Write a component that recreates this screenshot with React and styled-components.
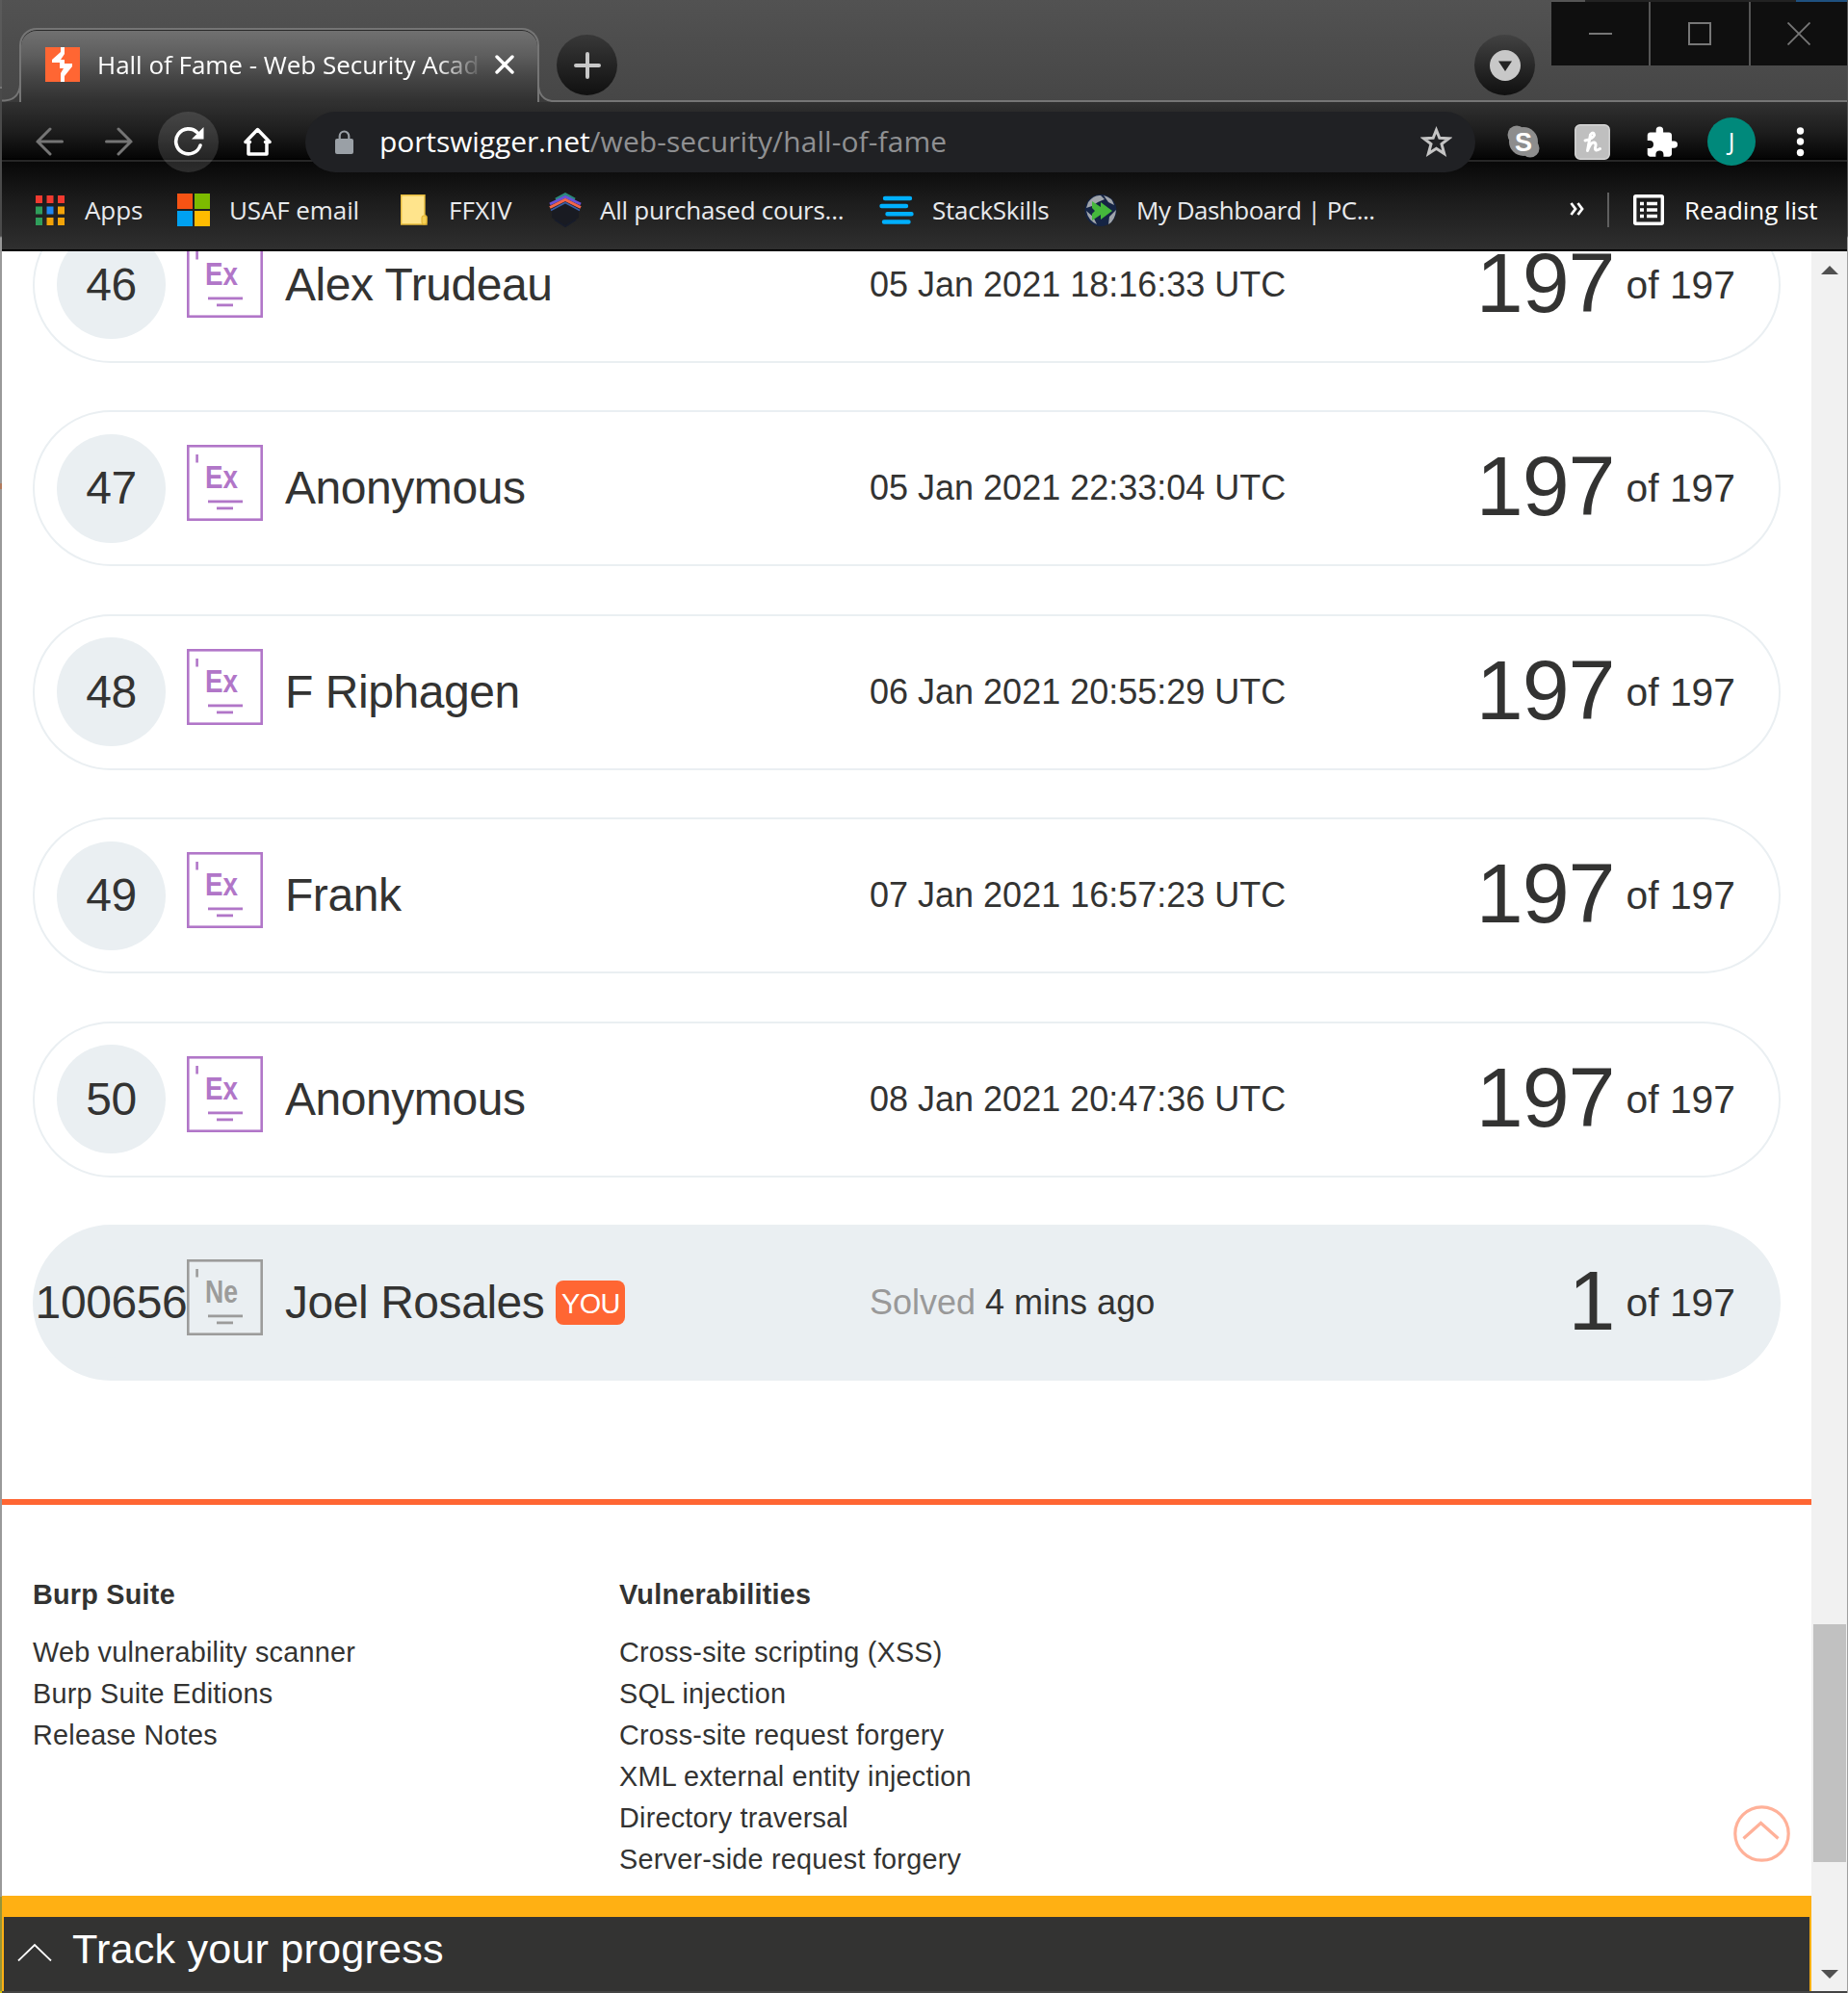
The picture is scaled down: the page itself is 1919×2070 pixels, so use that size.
import React from "react";
import styled, { createGlobalStyle } from "styled-components";

const Global = createGlobalStyle`
  * { box-sizing: border-box; }
  body { margin: 0; background: #fff; }
  svg { display: block; flex: none; }
`;

const ui = `"Open Sans", "Noto Sans", sans-serif`;

const Window = styled.div`
  display: grid;
  grid-template-columns: 2px 1916px 1px;
  width: 1919px;
  height: 2070px;
  overflow: hidden;
  font-family: "Liberation Sans", Arial, sans-serif;
  color: #333332;
`;
const LeftEdge = styled.div`
  background: linear-gradient(#5a5a5a 0 90px, #767676 90px 92px, #4a4a4a 92px 245px, #999 247px 502px, #b07a5c 502px 508px, #999 508px 1970px, #94943a 1970px 2068px, #d8c800 2068px);
`;
const RightEdge = styled.div`
  background: linear-gradient(#555 0 245px, #a0a0a0 247px);
`;
const Main = styled.div`
  display: flex;
  flex-direction: column;
  min-width: 0;
  height: 2070px;
`;

/* tab strip */
const Strip = styled.div`
  flex: none;
  height: 106px;
  display: flex;
  align-items: flex-end;
  background: linear-gradient(#525252, #464646);
`;
const Tab = styled.div`
  width: 540px;
  height: 77px;
  flex: none;
  display: flex;
  align-items: center;
  padding: 0 0 4px 25px;
  border: 2px solid #757575;
  border-bottom: 0;
  border-radius: 18px 18px 0 0;
  background: linear-gradient(#717171, #5e5e5e 35%, #464646 65%, #303030);
  box-shadow: inset 0 1px 0 #2a2a2a;
`;
const TabTitle = styled.div`
  width: 397px;
  margin-left: 18px;
  margin-right: 16px;
  white-space: nowrap;
  font: 26px/40px ${ui};
  letter-spacing: ${(p) => p.$ls}px;
  color: #fff;
  mask-image: linear-gradient(90deg, #000 350px, transparent 402px);
`;
const StripRest = styled.div`
  flex: 1;
  height: 106px;
  display: flex;
  justify-content: space-between;
  align-items: flex-start;
  border-bottom: 2px solid #757575;
`;
const Round = styled.div`
  width: 63px;
  height: 63px;
  margin: 36px 0 0 ${(p) => p.$ml || 0}px;
  border-radius: 50%;
  display: grid;
  place-items: center;
  background: linear-gradient(${(p) => p.$from || "#383838"}, #101010);
`;
const StripEnd = styled.div`
  display: flex;
`;
const Controls = styled.div`
  display: flex;
  gap: 2px;
  margin-left: 17px;
  border-top: 2px solid #222;
  border-image: linear-gradient(90deg, #555 0 37px, #222 37px 253px, #1f5180 253px) 2;
  height: 68px;
  background: #555;
`;
const Control = styled.div`
  width: ${(p) => p.$w}px;
  height: 66px;
  background: #0f0f0f;
  display: grid;
  place-items: center;
  padding-bottom: 1px;
`;

/* toolbar */
const Toolbar = styled.div`
  flex: none;
  height: 62px;
  display: flex;
  align-items: center;
  padding: 20px 43px 0 35px;
  background: linear-gradient(#313131, #1d1d1d 50%, #050505 94%, #000 95%, #000 97%, #262626 97%);
`;
const Nav = styled.div`
  width: 29px;
  margin-right: ${(p) => p.$mr}px;
`;
const Reload = styled.div`
  width: 63px;
  height: 63px;
  flex: none;
  margin-right: 26px;
  border-radius: 50%;
  background: rgba(255, 255, 255, 0.13);
  display: grid;
  place-items: center;
  align-self: center;
  position: relative;
`;
const Address = styled.div`
  width: 1215px;
  height: 63px;
  flex: none;
  margin-left: 35px;
  border-radius: 32px;
  background: #202124;
  display: flex;
  align-items: center;
  padding: 0 24px 0 31px;
  position: relative;
`;
const Url = styled.div`
  flex: 1;
  margin-left: 27px;
  font: 30px/44px ${ui};
  letter-spacing: 0.08px;
  color: #8f9092;
  white-space: nowrap;
  b { font-weight: 400; color: #fff; letter-spacing: -0.1px; }
`;
const Extensions = styled.div`
  flex: 1;
  display: flex;
  align-items: center;
  margin-left: 33px;
  position: relative;
`;
const Extension = styled.div`
  flex: none;
  margin-right: ${(p) => p.$mr}px;
`;
const Avatar = styled.div`
  width: 50px;
  height: 50px;
  flex: none;
  margin-right: 42px;
  border-radius: 50%;
  background: #00897b;
  color: #fff;
  font: 25px/49px ${ui};
  text-align: center;
`;

/* bookmarks */
const Bookmarks = styled.div`
  flex: none;
  height: 93px;
  display: flex;
  align-items: center;
  padding: 9px 32px 0 35px;
  border-bottom: 2px solid #000;
  background: linear-gradient(#080808, #1c1c1c 45%, #2f2f2f);
`;
const Bookmark = styled.div`
  display: flex;
  align-items: center;
  flex: none;
  width: ${(p) => p.$w}px;
  gap: ${(p) => p.$gap}px;
  font: 26px/36px ${ui};
  letter-spacing: ${(p) => p.$ls}px;
  color: ${(p) => p.$color || "#e8eaed"};
  white-space: nowrap;
`;
const More = styled.div`
  flex: 1;
  display: flex;
  justify-content: flex-end;
  padding: 0 24px 3px 0;
`;
const Divider = styled.div`
  width: 2px;
  height: 36px;
  margin-right: 25px;
  background: #5f5f5f;
`;

/* page */
const Body = styled.div`
  flex: 1;
  min-height: 0;
  display: grid;
  grid-template-columns: 1879px 37px;
  border-bottom: 2px solid #444;
`;
const Page = styled.div`
  position: relative;
  display: flex;
  flex-direction: column;
  min-height: 0;
  background: #fff;
`;
const Scroller = styled.div`
  flex: 1;
  min-height: 0;
  overflow: hidden;
`;
const List = styled.div`
  display: flex;
  flex-direction: column;
  gap: 49.45px;
  margin-top: -46.2px;
  padding: 0 32px 122.95px;
  border-bottom: 6px solid #ff6633;
`;
const Row = styled.div`
  height: 162px;
  flex: none;
  display: grid;
  grid-template-columns: 113px 79px 607px 1fr auto;
  align-items: center;
  padding: 0 45px 0 23px;
  border: 2px solid #eaeff2;
  border-radius: 81px;
  background: ${(p) => (p.$you ? "#eaeff2" : "#fff")};
`;
const Rank = styled.div`
  width: 113px;
  height: 113px;
  border-radius: 50%;
  background: #eaeff2;
  display: flex;
  align-items: center;
  justify-content: center;
  font-size: 48px;
  line-height: 60px;
  letter-spacing: -0.4px;
`;
const BadgeBox = styled.div`
  margin: 0 0 11px 22px;
  position: relative;
  z-index: 1;
`;
const Name = styled.div`
  display: flex;
  align-items: center;
  margin-left: 45px;
  font-size: 48px;
  line-height: 60px;
  letter-spacing: -0.45px;
  white-space: nowrap;
`;
const You = styled.span`
  width: 72px;
  height: 46px;
  margin-left: 12px;
  border-radius: 8px;
  background: #ff6633;
  color: #fff;
  font-size: 28.8px;
  line-height: 48px;
  letter-spacing: -0.6px;
  text-align: center;
`;
const Time = styled.div`
  margin-left: 45px;
  font-size: 36px;
  line-height: 44px;
  white-space: nowrap;
  i { font-style: normal; color: #999; }
`;
const Score = styled.div`
  display: flex;
  align-items: center;
  gap: 12px;
  font-size: 40.8px;
  line-height: 50px;
  white-space: nowrap;
`;
const Big = styled.span`
  font-size: 88px;
  line-height: 88px;
  letter-spacing: -1px;
  padding-bottom: 4px;
`;
const Footer = styled.div`
  display: grid;
  grid-template-columns: 609px 1fr;
  padding: 72px 32px 0;
  font-size: 28.8px;
  line-height: 43px;
  letter-spacing: 0.23px;
`;
const Heading = styled.div`
  font-weight: 700;
  margin-bottom: 17px;
`;
const Top = styled.div`
  position: absolute;
  right: 22px;
  bottom: 134px;
`;
const Progress = styled.div`
  flex: none;
  height: 99px;
  border: 2px solid #ffb013;
  border-top-width: 22px;
  border-bottom: 0;
  background: #333332;
  color: #fff;
  display: flex;
  align-items: flex-start;
  padding: 8px 0 0 14px;
  font-size: 43.2px;
  line-height: 50px;
  letter-spacing: 0.18px;
  gap: 21px;
`;
const Scrollbar = styled.div`
  background: #f1f1f1;
  display: flex;
  flex-direction: column;
  align-items: center;
  padding: 15px 0 13px;
`;
const Thumb = styled.div`
  width: 34px;
  height: 247px;
  margin: 1402px 0 auto;
  background: #c1c1c1;
`;

const Cert = ({ text, color }) => (
  <svg width="79" height="79" viewBox="0 0 79 79">
    <rect x="1.3" y="1.3" width="76.4" height="76.4" fill="none" stroke={color} strokeWidth="2.6" />
    <rect x="9.3" y="10" width="2.6" height="8.5" fill={color} />
    <text x="19" y="45" fill={color} fontFamily="Liberation Sans, Arial, sans-serif" fontWeight="700" fontSize="34" textLength="34" lengthAdjust="spacingAndGlyphs">{text}</text>
    <rect x="22" y="57.5" width="36" height="2.8" fill={color} />
    <rect x="31" y="64.5" width="17" height="2.8" fill={color} />
  </svg>
);

const rows = [
  { n: "46", name: "Alex Trudeau", t: "05 Jan 2021 18:16:33 UTC" },
  { n: "47", name: "Anonymous", t: "05 Jan 2021 22:33:04 UTC" },
  { n: "48", name: "F Riphagen", t: "06 Jan 2021 20:55:29 UTC" },
  { n: "49", name: "Frank", t: "07 Jan 2021 16:57:23 UTC" },
  { n: "50", name: "Anonymous", t: "08 Jan 2021 20:47:36 UTC" },
];

const appColors = ["#f13a30", "#f13a30", "#f13a30", "#2f9e5b", "#1f86f0", "#f2a309", "#2f9e5b", "#f2a309", "#f2a309"];

const Browser = () => (
  <>
    <Strip>
      <svg width="18" height="77" viewBox="0 0 18 77">
        <path d="M0 76H3Q17 75 18 57V77H0Z" fill="#3a3a3a" />
        <path d="M0 75.500H3Q18 74.500 19 58" fill="none" stroke="#757575" strokeWidth="2" />
      </svg>
      <Tab>
        <svg width="36" height="36" viewBox="0 0 36 36">
          <rect width="36" height="36" fill="#ff6633" />
          <path d="M16 0H20V7L16 13H20V17H28V20L20 30V36H16V27L19 22H15V16H7V13L16 5Z" fill="#fff" />
        </svg>
        <TabTitle $ls={-0.02}>Hall of Fame - Web Security Acad</TabTitle>
        <svg width="20" height="20" viewBox="0 0 20 20"><path d="M2 2L18 18M18 2L2 18" stroke="#fff" strokeWidth="3.400" strokeLinecap="round" /></svg>
      </Tab>
      <svg width="16" height="77" viewBox="0 0 16 77">
        <path d="M0 57Q1 76 16 77H0Z" fill="#3a3a3a" />
        <path d="M-1 57Q-1 74 13 76H16" fill="none" stroke="#757575" strokeWidth="2" />
      </svg>
      <StripRest>
        <Round $ml={2}>
          <svg width="28" height="28" viewBox="0 0 28 28"><path d="M14 2V26M2 14H26" stroke="#c8c8c8" strokeWidth="4" strokeLinecap="round" /></svg>
        </Round>
        <StripEnd>
          <Round $from="#424242">
            <svg width="32" height="32" viewBox="0 0 32 32"><circle cx="16" cy="16" r="16" fill="#c8c8c8" /><path d="M9 11.500H23L16 22Z" fill="#222" /></svg>
          </Round>
          <Controls>
            <Control $w={101}><svg width="24" height="24"><path d="M0 12H24" stroke="#777" strokeWidth="2" /></svg></Control>
            <Control $w={102}><svg width="24" height="24"><rect x="1" y="1" width="22" height="22" fill="none" stroke="#777" strokeWidth="2" /></svg></Control>
            <Control $w={100}><svg width="24" height="24"><path d="M.5.5L23.500 23.500M23.500.5L.5 23.500" stroke="#777" strokeWidth="1.800" /></svg></Control>
          </Controls>
        </StripEnd>
      </StripRest>
    </Strip>
    <Toolbar>
      <Nav $mr={43}><svg width="29" height="30" viewBox="0 0 29 30" fill="none" stroke="#757575" strokeWidth="3" strokeLinecap="round"><path d="M27.500 15H2M15 2L2 15L15 28" /></svg></Nav>
      <Nav $mr={26}><svg width="29" height="30" viewBox="0 0 29 30" fill="none" stroke="#757575" strokeWidth="3" strokeLinecap="round"><path d="M1.500 15H27M14 2L27 15L14 28" /></svg></Nav>
      <Reload>
        <svg width="32" height="32" viewBox="0 0 32 32"><path d="M28 20A13 13 0 1 1 25 6.800" fill="none" stroke="#fff" strokeWidth="3.600" strokeLinecap="round" /><path d="M31.500 1V13.500H19Z" fill="#fff" /></svg>
      </Reload>
      <Nav $mr={0}><svg width="29" height="30" viewBox="0 0 29 30"><path d="M5 14V28H24V14M2 15.500L14.500 2.500L27 15.500H22.500M2 15.500H6.500" fill="none" stroke="#fff" strokeWidth="3.500" strokeLinejoin="round" strokeLinecap="round" /></svg></Nav>
      <Address>
        <svg width="19" height="25" viewBox="0 0 19 25"><rect y="9" width="19" height="16" rx="2" fill="#9aa0a6" /><path d="M4.700 10V6.500A4.800 5 0 0 1 14.300 6.500V10" fill="none" stroke="#9aa0a6" strokeWidth="2.200" /></svg>
        <Url><b>portswigger.net</b>/web-security/hall-of-fame</Url>
        <svg width="33" height="32" viewBox="0 0 33 32"><path d="M16.500 4L19.800 12.200L29.500 12.800L22 18.600L24.700 28.500L16.500 23.200L8.300 28.500L11 18.600L3.500 12.800L13.200 12.200Z" fill="none" stroke="#c4c4c4" strokeWidth="3" /></svg>
      </Address>
      <Extensions>
        <Extension $mr={36}>
          <svg width="34" height="34" viewBox="0 0 34 34">
            <circle cx="17" cy="17" r="15" fill="#8d8d8d" /><circle cx="10" cy="10" r="9.500" fill="#8d8d8d" /><circle cx="24" cy="24" r="9.500" fill="#8d8d8d" />
            <text x="17" y="26.500" textAnchor="middle" fontFamily="Liberation Sans, sans-serif" fontWeight="700" fontSize="27" fill="#fff">S</text>
          </svg>
        </Extension>
        <Extension $mr={38}>
          <svg width="37" height="37" viewBox="0 0 37 37">
            <rect x=".8" y=".8" width="35.400" height="35.400" rx="5" fill="#bfbfbf" stroke="#d6d6d6" strokeWidth="1.500" />
            <path d="M11 17Q19 15 20.500 11.500Q20 7 16.500 11L13.500 27.500Q17 18 20.500 19Q23 20 21.500 24.500Q21 29 26.500 25.500" fill="none" stroke="#fff" strokeWidth="3" strokeLinecap="round" strokeLinejoin="round" />
          </svg>
        </Extension>
        <Extension $mr={31}>
          <svg width="32" height="33" viewBox="1.500 1 21.500 21.500"><path d="M20.500 11H19V7c0-1.100-.9-2-2-2h-4V3.500a2.500 2.500 0 0 0-5 0V5H4c-1.100 0-2 .9-2 2v3.800h1.500a2.700 2.700 0 0 1 0 5.400H2V20c0 1.100.9 2 2 2h3.800v-1.500a2.700 2.700 0 0 1 5.400 0V22H17c1.100 0 2-.9 2-2v-4h1.500a2.500 2.500 0 0 0 0-5z" fill="#fff" /></svg>
        </Extension>
        <Avatar>J</Avatar>
        <svg width="9" height="32" viewBox="0 0 9 32"><g fill="#fff"><circle cx="4.500" cy="5" r="3.700" /><circle cx="4.500" cy="16" r="3.700" /><circle cx="4.500" cy="27.500" r="3.700" /></g></svg>
      </Extensions>
    </Toolbar>
    <Bookmarks>
      <Bookmark $w={147} $gap={21} $ls={-0.1}>
        <svg width="30" height="31" viewBox="0 0 30 31">{appColors.map((c, i) => <rect key={i} x={(i % 3) * 11.5} y={Math.floor(i / 3) * 11.5} width="7" height="8" fill={c} />)}</svg>
        Apps
      </Bookmark>
      <Bookmark $w={232} $gap={20} $ls={-0.1}>
        <svg width="34" height="34" viewBox="0 0 34 34"><rect width="16" height="16" fill="#f65314" /><rect x="18" width="16" height="16" fill="#7cbb00" /><rect y="18" width="16" height="16" fill="#00a1f1" /><rect x="18" y="18" width="16" height="16" fill="#ffbb00" /></svg>
        USAF email
      </Bookmark>
      <Bookmark $w={153} $gap={22} $ls={0.2}>
        <svg width="28" height="32" viewBox="0 0 28 32"><path d="M.7.7H25V21L27 23V31H.7Z" fill="#ffe48c" stroke="#e6bb3c" strokeWidth="1.400" /><rect x="22" y="22" width="5" height="9" rx="2" fill="#f5cf55" stroke="#e0b02c" /></svg>
        FFXIV
      </Bookmark>
      <Bookmark $w={344} $gap={18} $ls={-0.25}>
        <svg width="36" height="37" viewBox="0 0 36 37"><path d="M4 16L18 9L32 16V26L18 35L4 26Z" fill="#191b22" /><path d="M7 28L18 35L29 28" fill="none" stroke="#171c2a" strokeWidth="2" /><path d="M8 7L18 1.500L28 7" fill="none" stroke="#2a8a7c" strokeWidth="2.600" /><path d="M2 12L18 4.500L34 12" fill="none" stroke="#6a52d8" strokeWidth="3" /><path d="M2 15.500L18 7.500L34 15.500" fill="none" stroke="#f4664a" strokeWidth="3" /><path d="M3 18.500L18 10.500L33 18.500" fill="none" stroke="#3b5ea8" strokeWidth="1.600" /></svg>
        All purchased cours...
      </Bookmark>
      <Bookmark $w={213} $gap={19} $ls={-0.25}>
        <svg width="36" height="30" viewBox="0 0 36 30"><g stroke="#00b0ff" strokeWidth="4.400" strokeLinecap="round"><path d="M6 3H32M2.500 11H28M8.500 19.300H33.500M5 27.500H30.500" /></g></svg>
        StackSkills
      </Bookmark>
      <Bookmark $w={300} $gap={20} $ls={-0.5}>
        <svg width="34" height="35" viewBox="0 0 34 35"><circle cx="17" cy="17.500" r="16.500" fill="#152444" /><path d="M4 9Q10 1 17 2L21 6L14 9L8 13L2 15ZM20 2Q29 4 31 12L25 9ZM2 18L9 24L13 32Q4 28 2 18ZM26 24L33 17Q32 28 25 32Z" fill="#a0a5ab" /><path d="M8 8L17 14V9L29 18L17 27V22L8 28V21L11 18L8 15Z" fill="#45b83c" /></svg>
        My Dashboard | PC...
      </Bookmark>
      <More><svg width="15" height="14" viewBox="0 0 15 14"><path d="M1.500 1L6 7L1.500 13M8.500 1L13 7L8.500 13" fill="none" stroke="#fff" strokeWidth="2.800" /></svg></More>
      <Divider />
      <Bookmark $w={190} $gap={21} $ls={-0.05} $color="#fff">
        <svg width="32" height="32" viewBox="0 0 32 32"><rect x="1.700" y="1.700" width="28.600" height="28.600" rx="1" fill="none" stroke="#fff" strokeWidth="3.400" /><path d="M7 9.500H11M14 9.500H25M7 16H11M14 16H25M7 22.500H11M14 22.500H25" stroke="#fff" strokeWidth="3.600" /></svg>
        Reading list
      </Bookmark>
    </Bookmarks>
  </>
);

const Entry = ({ n, name, you, time, score, cert, color }) => (
  <Row $you={you}>
    <Rank>{n}</Rank>
    <BadgeBox><Cert text={cert} color={color} /></BadgeBox>
    <Name>{name}{you && <You>YOU</You>}</Name>
    <Time>{time}</Time>
    <Score><Big>{score}</Big>of 197</Score>
  </Row>
);

export default function App() {
  return (
    <Window>
      <Global />
      <LeftEdge />
      <Main>
        <Browser />
        <Body>
          <Page>
            <Scroller>
              <List>
                {rows.map((r) => <Entry key={r.n} n={r.n} name={r.name} time={r.t} score="197" cert="Ex" color="#b176c8" />)}
                <Entry n="100656" name="Joel Rosales" you time={<><i>Solved</i> 4 mins ago</>} score="1" cert="Ne" color="#9c9c9b" />
              </List>
              <Footer>
                <div>
                  <Heading>Burp Suite</Heading>
                  <div>Web vulnerability scanner</div>
                  <div>Burp Suite Editions</div>
                  <div>Release Notes</div>
                </div>
                <div>
                  <Heading>Vulnerabilities</Heading>
                  <div>Cross-site scripting (XSS)</div>
                  <div>SQL injection</div>
                  <div>Cross-site request forgery</div>
                  <div>XML external entity injection</div>
                  <div>Directory traversal</div>
                  <div>Server-side request forgery</div>
                </div>
              </Footer>
            </Scroller>
            <Top>
              <svg width="59" height="59" viewBox="0 0 59 59" fill="none" stroke="#ffb199" strokeWidth="3.200"><circle cx="29.500" cy="29.500" r="27.700" /><path d="M10.500 34.500L28.500 18.500L46.500 34.500" /></svg>
            </Top>
            <Progress>
              <svg width="36" height="38" viewBox="0 0 36 38"><path d="M1 37.500L18 21L35 37.500" fill="none" stroke="#fff" strokeWidth="1.800" /></svg>
              Track your progress
            </Progress>
          </Page>
          <Scrollbar>
            <svg width="18" height="9"><path d="M0 9L9 0L18 9Z" fill="#505050" /></svg>
            <Thumb />
            <svg width="18" height="9"><path d="M0 0L9 9L18 0Z" fill="#505050" /></svg>
          </Scrollbar>
        </Body>
      </Main>
      <RightEdge />
    </Window>
  );
}
